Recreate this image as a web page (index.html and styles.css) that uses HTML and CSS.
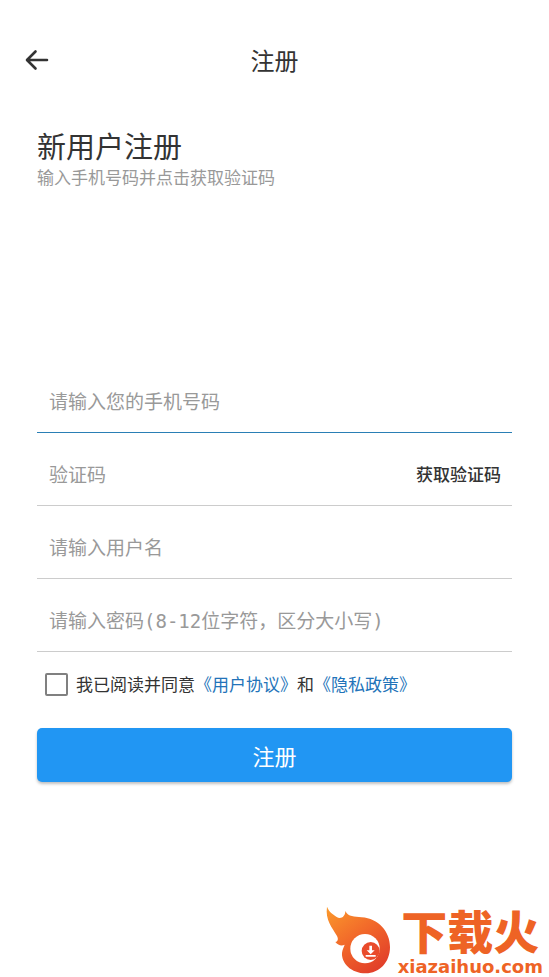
FILE: index.html
```
<!DOCTYPE html>
<html lang="zh-CN">
<head>
  <meta charset="UTF-8">
  <meta name="viewport" content="width=device-width, initial-scale=1">
  <title>注册</title>
  <link rel="stylesheet" href="styles.css">
</head>
<body>

  <header class="top-bar">
    <button type="button" class="back-btn" aria-label="返回">
      <svg width="24" height="22" viewBox="0 0 24 22" fill="none" stroke="#333" stroke-width="2.6" stroke-linecap="round" stroke-linejoin="round">
        <path d="M10.500 2.500 L2 11 L10.500 19.500 M2.500 11 H22" />
      </svg>
    </button>
    <h1 class="title">注册</h1>
  </header>

  <main class="content">
    <h2 class="heading">新用户注册</h2>
    <p class="hint">输入手机号码并点击获取验证码</p>

    <form id="registerForm">
      <div class="field active">
        <input type="tel" id="phone" placeholder="请输入您的手机号码" aria-label="手机号码" />
      </div>
      <div class="field">
        <input type="text" id="code" placeholder="验证码" aria-label="验证码" />
        <button type="button" class="code-btn">获取验证码</button>
      </div>
      <div class="field">
        <input type="text" id="username" placeholder="请输入用户名" aria-label="用户名" />
      </div>
      <div class="field">
        <input type="password" id="password" class="password" placeholder="请输入密码(8-12位字符，区分大小写)" aria-label="密码" />
      </div>

      <div class="agree">
        <input type="checkbox" id="agree" />
        <label for="agree">我已阅读并同意<a href="#">《用户协议》</a>和<a href="#">《隐私政策》</a></label>
      </div>

      <button type="submit" class="submit-btn">注册</button>
    </form>
  </main>

  <footer class="brand">
    <svg class="flame" width="70" height="77" viewBox="0 0 210 231">
      <defs>
        <linearGradient id="fire" x1="0" y1="0" x2="0.7" y2="1">
          <stop offset="0" stop-color="#fb9a2c" />
          <stop offset="0.5" stop-color="#f26a2a" />
          <stop offset="1" stop-color="#e2402a" />
        </linearGradient>
      </defs>
      <path fill="url(#fire)" d="M18 20 C24 36 36 43 47 51 C59 59 73 50 73 33 C82 51 100 49 122 52 C172 55 207 95 207 141 C207 187 175 220 134 220 C91 220 61 190 63 159 C64 149 68 142 71 134 C62 139 51 136 43 126 C50 125 53 118 48 108 C34 83 12 60 18 20 Z" />
      <circle cx="132" cy="146" r="44" fill="#fff" />
      <circle cx="149" cy="153" r="27" fill="#e94b2b" />
      <path fill="#fff" d="M145 137 h8 v14 h8 l-12 12 l-12 -12 h8 Z M134 165 h30 v5 h-30 Z" />
    </svg>
    <div class="brand-text">
      <span class="brand-name">下载火</span>
      <span class="brand-url">xiazaihuo.com</span>
    </div>
  </footer>

</body>
</html>
```
FILE: styles.css
```
* {
  box-sizing: border-box;
}
body {
  margin: 0;
  min-height: 100vh;
  display: flex;
  flex-direction: column;
  background: #fff;
  color: #333;
  font-family: "Noto Sans CJK SC", sans-serif;
}
input, button {
  font-family: inherit;
  color: inherit;
  border: none;
  background: none;
  padding: 0;
}
button {
  cursor: pointer;
}
.top-bar {
  display: grid;
  grid-template-columns: 24px 1fr 24px;
  align-items: center;
  padding: 42px 25px 0;
}
.back-btn {
  display: flex;
}
.title {
  margin: 0;
  font-size: 24px;
  font-weight: 400;
  line-height: 36px;
  text-align: center;
}
.content {
  padding: 49px 37px 0;
}
.heading {
  margin: 0;
  font-size: 29px;
  font-weight: 400;
  line-height: 36px;
}
.hint {
  margin: 0 0 170px;
  font-size: 17px;
  line-height: 27px;
  color: #999;
}
.field {
  display: flex;
  align-items: center;
  height: 73px;
  padding: 8px 11px 0 12px;
  border-bottom: 1px solid #ccc;
}
.field.active {
  border-bottom-color: #2a7fb5;
}
.field input {
  flex: 1;
  min-width: 0;
  height: 40px;
  font-size: 19px;
  outline: none;
}
.field input::placeholder {
  color: #999;
  opacity: 1;
}
.field .password {
  padding-top: 4px;
  font-family: "DejaVu Sans Mono", "Noto Sans CJK SC", monospace;
}
.code-btn {
  font-size: 17px;
  font-weight: 500;
}
.agree {
  display: flex;
  align-items: center;
  gap: 8px;
  margin-top: 20px;
  padding-left: 8px;
  font-size: 17px;
  line-height: 24px;
}
.agree input {
  appearance: none;
  width: 23px;
  height: 23px;
  margin: 0;
  border: 2px solid #808080;
  border-radius: 2px;
}
.agree input:checked {
  background: #2196f3;
}
.agree a {
  color: #2273b9;
  text-decoration: none;
}
.submit-btn {
  display: block;
  width: 100%;
  height: 54px;
  margin-top: 32px;
  border-radius: 5px;
  background: #2196f3;
  box-shadow: 0 2px 3px rgba(0,0,0,0.25);
  color: #fff;
  font-size: 22px;
}
.brand {
  display: flex;
  align-items: flex-end;
  gap: 7px;
  margin-top: auto;
  margin-left: auto;
  padding-right: 6px;
  color: #ee6325;
}
.brand-text {
  display: flex;
  flex-direction: column;
  align-items: center;
}
.brand-name {
  padding-bottom: 3px;
  font-size: 46px;
  font-weight: 900;
  line-height: 50px;
}
.brand-url {
  font-family: "DejaVu Sans", sans-serif;
  font-size: 18px;
  font-weight: 700;
  line-height: 20px;
}
```
